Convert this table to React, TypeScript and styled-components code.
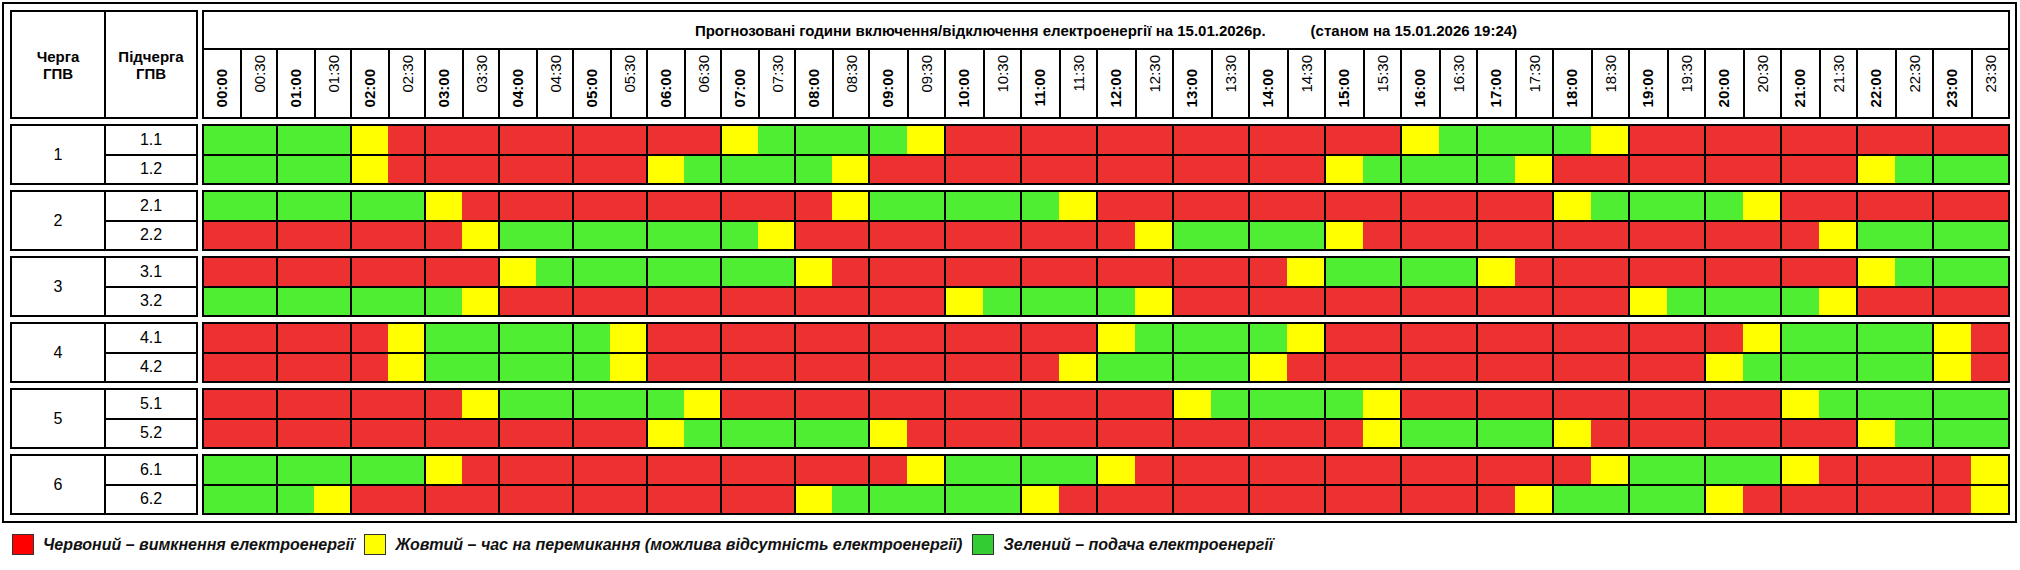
import { Fragment } from "react";
import styled, { createGlobalStyle } from "styled-components";

const GlobalStyle = createGlobalStyle`
  html, body {
    margin: 0;
    padding: 0;
    background: #fff;
  }
  body {
    font-family: "Liberation Sans", Arial, sans-serif;
    color: #000;
  }
`;

type Slot = "R" | "Y" | "G";

const SLOT_COLORS: Record<Slot, string> = {
  R: "#ed3131",
  Y: "#ffff00",
  G: "#4fee33",
};

// one pair of letters per hour: first and second half-hour
const SCHEDULE: { group: string; subs: { name: string; slots: string }[] }[] = [
  {
    group: "1",
    subs: [
      { name: "1.1", slots: "GG GG YR RR RR RR RR YG GG GY RR RR RR RR RR RR YG GG GY RR RR RR RR RR" },
      { name: "1.2", slots: "GG GG YR RR RR RR YG GG GY RR RR RR RR RR RR YG GG GY RR RR RR RR YG GG" },
    ],
  },
  {
    group: "2",
    subs: [
      { name: "2.1", slots: "GG GG GG YR RR RR RR RR RY GG GG GY RR RR RR RR RR RR YG GG GY RR RR RR" },
      { name: "2.2", slots: "RR RR RR RY GG GG GG GY RR RR RR RR RY GG GG YR RR RR RR RR RR RY GG GG" },
    ],
  },
  {
    group: "3",
    subs: [
      { name: "3.1", slots: "RR RR RR RR YG GG GG GG YR RR RR RR RR RR RY GG GG YR RR RR RR RR YG GG" },
      { name: "3.2", slots: "GG GG GG GY RR RR RR RR RR RR YG GG GY RR RR RR RR RR RR YG GG GY RR RR" },
    ],
  },
  {
    group: "4",
    subs: [
      { name: "4.1", slots: "RR RR RY GG GG GY RR RR RR RR RR RR YG GG GY RR RR RR RR RR RY GG GG YR" },
      { name: "4.2", slots: "RR RR RY GG GG GY RR RR RR RR RR RY GG GG YR RR RR RR RR RR YG GG GG YR" },
    ],
  },
  {
    group: "5",
    subs: [
      { name: "5.1", slots: "RR RR RR RY GG GG GY RR RR RR RR RR RR YG GG GY RR RR RR RR RR YG GG GG" },
      { name: "5.2", slots: "RR RR RR RR RR RR YG GG GG YR RR RR RR RR RR RY GG GG YR RR RR RR YG GG" },
    ],
  },
  {
    group: "6",
    subs: [
      { name: "6.1", slots: "GG GG GG YR RR RR RR RR RR RY GG GG YR RR RR RR RR RR RY GG GG YR RR RY" },
      { name: "6.2", slots: "GG GY RR RR RR RR RR RR YG GG GG YR RR RR RR RR RR RY GG GG YR RR RR RY" },
    ],
  },
];

const HOURS = Array.from({ length: 24 }, (_, h) => String(h).padStart(2, "0"));

const Frame = styled.div`
  box-sizing: border-box;
  width: 2015px;
  margin: 2px 0 0 2px;
  border: 2px solid #000;
  padding: 6px 5px 6px 6px;
`;

const Board = styled.div`
  display: grid;
  grid-template-columns: 188px 1fr;
  grid-template-rows: 109px repeat(6, 61px);
  column-gap: 4px;
  row-gap: 5px;
`;

const LeftBox = styled.div`
  display: grid;
  grid-template-columns: 92px 90px;
  grid-auto-rows: 1fr;
  gap: 2px;
  background: #000;
  border: 2px solid #000;
`;

const HeadCell = styled.div`
  background: #fff;
  display: flex;
  align-items: center;
  justify-content: center;
  text-align: center;
  font-size: 15px;
  font-weight: 700;
  line-height: 17px;
`;

const GroupNum = styled.div`
  grid-row: 1 / span 2;
  background: #fff;
  display: flex;
  align-items: center;
  justify-content: center;
  font-size: 16px;
`;

const SubCell = styled.div`
  background: #fff;
  display: flex;
  align-items: center;
  justify-content: center;
  font-size: 16px;
`;

const TimeBox = styled.div`
  display: flex;
  flex-direction: column;
  gap: 2px;
  background: #000;
  border: 2px solid #000;
`;

const TitleRow = styled.div`
  height: 36px;
  flex-shrink: 0;
  background: #fff;
  display: flex;
  align-items: center;
  justify-content: center;
  font-size: 15px;
  font-weight: 700;
  white-space: pre;
`;

const AsOf = styled.span`
  margin-left: 45px;
`;

const HourGrid = styled.div`
  flex: 1;
  display: grid;
  grid-template-columns: repeat(9, minmax(0, 72fr)) repeat(15, minmax(0, 74fr));
  gap: 2px;
  background: #000;
`;

const SlotPair = styled.div`
  display: flex;
  gap: 2px;
`;

const TimeLabel = styled.div<{ $bold?: boolean }>`
  flex: 1;
  background: #fff;
  display: flex;
  flex-direction: column;
  align-items: center;
  justify-content: ${(p) => (p.$bold ? "flex-end" : "flex-start")};
  padding: ${(p) => (p.$bold ? "0 2px 10px 0" : "5px 0 0 0")};
  font-size: 15px;
  font-weight: ${(p) => (p.$bold ? 700 : 400)};

  span {
    writing-mode: vertical-rl;
    transform: rotate(180deg);
    line-height: 15px;
  }
`;

const RowsBox = styled.div`
  display: grid;
  grid-template-rows: 1fr 1fr;
  gap: 2px;
  background: #000;
  border: 2px solid #000;
`;

const HourCell = styled.div`
  display: flex;
`;

const Half = styled.div<{ $slot: Slot }>`
  flex: 1;
  background: ${(p) => SLOT_COLORS[p.$slot]};
`;

const Legend = styled.div`
  display: flex;
  align-items: center;
  padding: 11px 0 0 12px;
`;

const Swatch = styled.div<{ $color: string }>`
  box-sizing: border-box;
  width: 22px;
  height: 21px;
  border: 1px solid #333;
  background: ${(p) => p.$color};
  margin-right: 9px;
`;

const LegendText = styled.span`
  font-size: 16px;
  font-weight: 700;
  font-style: italic;
  color: #111;
  margin-right: 10px;
`;

function ScheduleRow({ slots }: { slots: string }) {
  const s = slots.replace(/\s/g, "").split("") as Slot[];
  return (
    <HourGrid>
      {HOURS.map((h, i) => (
        <HourCell key={h}>
          <Half $slot={s[i * 2]} />
          <Half $slot={s[i * 2 + 1]} />
        </HourCell>
      ))}
    </HourGrid>
  );
}

export default function App() {
  return (
    <>
      <GlobalStyle />
      <Frame>
        <Board>
          <LeftBox>
            <HeadCell>
              Черга
              <br />
              ГПВ
            </HeadCell>
            <HeadCell>
              Підчерга
              <br />
              ГПВ
            </HeadCell>
          </LeftBox>
          <TimeBox>
            <TitleRow>
              Прогнозовані години включення/відключення електроенергії на 15.01.2026р.
              <AsOf>(станом на 15.01.2026 19:24)</AsOf>
            </TitleRow>
            <HourGrid>
              {HOURS.map((h) => (
                <SlotPair key={h}>
                  <TimeLabel $bold>
                    <span>{h}:00</span>
                  </TimeLabel>
                  <TimeLabel>
                    <span>{h}:30</span>
                  </TimeLabel>
                </SlotPair>
              ))}
            </HourGrid>
          </TimeBox>

          {SCHEDULE.map((g) => (
            <Fragment key={g.group}>
              <LeftBox>
                <GroupNum>{g.group}</GroupNum>
                {g.subs.map((s) => (
                  <SubCell key={s.name}>{s.name}</SubCell>
                ))}
              </LeftBox>
              <RowsBox>
                {g.subs.map((s) => (
                  <ScheduleRow key={s.name} slots={s.slots} />
                ))}
              </RowsBox>
            </Fragment>
          ))}
        </Board>
      </Frame>
      <Legend>
        <Swatch $color="#ff0000" />
        <LegendText>Червоний – вимкнення електроенергії</LegendText>
        <Swatch $color="#ffff00" />
        <LegendText>Жовтий – час на перемикання (можлива відсутність електроенергії)</LegendText>
        <Swatch $color="#33cc33" />
        <LegendText>Зелений – подача електроенергії</LegendText>
      </Legend>
    </>
  );
}
